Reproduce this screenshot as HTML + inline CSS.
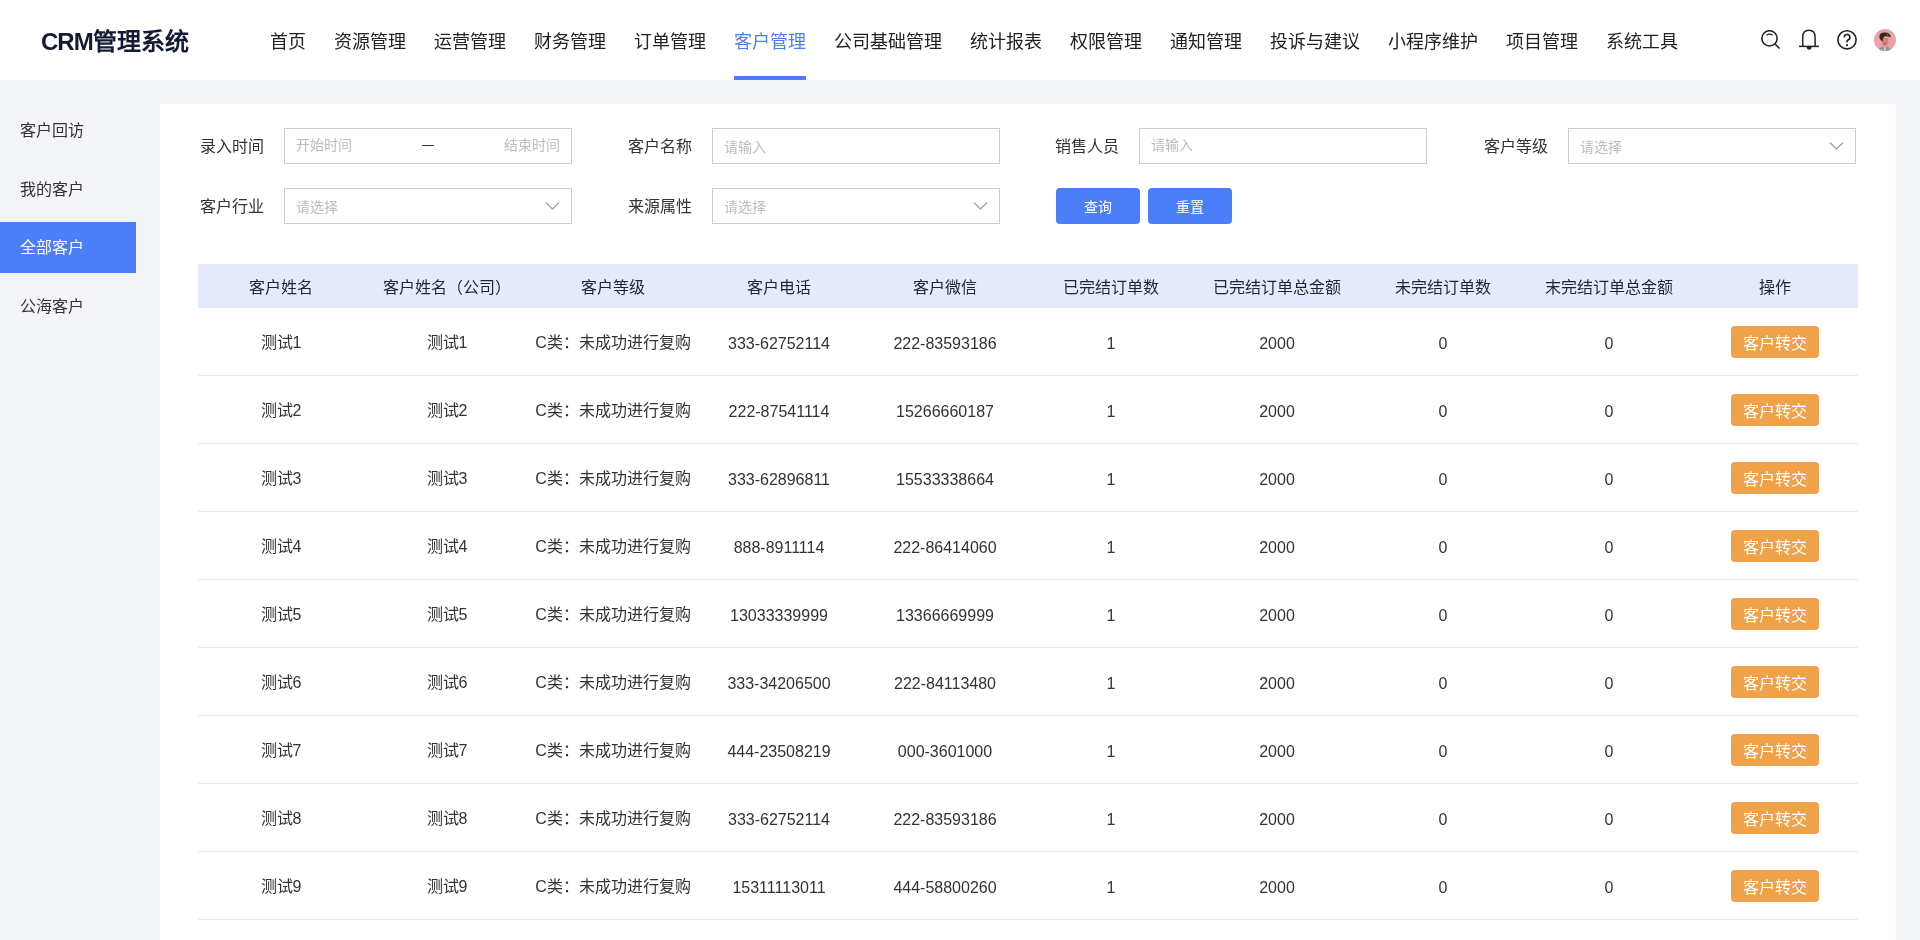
<!DOCTYPE html>
<html lang="zh-CN"><head><meta charset="utf-8">
<style>
*{box-sizing:border-box;margin:0;padding:0}
html,body{width:1920px;height:940px;overflow:hidden}
body{background:#f4f5f9;font-family:"Liberation Sans",sans-serif;color:#333;position:relative}
.hdr{position:absolute;left:0;top:0;width:1920px;height:80px;background:#fff}
.logo{position:absolute;left:41px;top:26px;font-size:24px;font-weight:bold;color:#141a33;line-height:32px;white-space:nowrap}
.nav{position:absolute;left:270px;top:0;height:80px;display:flex;white-space:nowrap}
.nav a{display:block;position:relative;font-size:18px;line-height:84px;height:80px;color:#222;margin-right:28px;text-decoration:none}
.nav a.on{color:#4d7efa}
.nav a.on:after{content:"";position:absolute;left:0;right:0;bottom:0;height:4px;background:#4d7efa}
.ico{position:absolute;top:0}
.side{position:absolute;left:0;top:80px;width:136px}
.side div{position:absolute;left:0;width:136px;height:50px;line-height:52px;padding-left:20px;font-size:16px;color:#333}
.side div.on{background:#4d7efa;color:#fff;height:51px}
.panel{position:absolute;left:160px;top:104px;width:1736px;height:836px;background:#fff}
.lbl{position:absolute;font-size:16px;color:#333;line-height:38px;white-space:nowrap}
.inp{position:absolute;width:288px;height:36px;border:1px solid #cdcdcd;background:#fff}
.ph{position:absolute;font-size:14px;color:#bdbdbd;line-height:36px;white-space:nowrap}
.btn{position:absolute;top:188px;width:84px;height:36px;border-radius:4px;background:#4d7efa;color:#fff;font-size:14px;line-height:38px;text-align:center}
.thead{position:absolute;left:198px;top:264px;width:1660px;height:44px;background:#e5eafc;display:flex}
.thead div{width:166px;text-align:center;line-height:47px;font-size:16px;color:#1f2336;white-space:nowrap}
.row{position:absolute;left:198px;width:1660px;height:68px;border-bottom:1px solid #e9eaee;display:flex}
.row div{width:166px;text-align:center;line-height:69px;font-size:16px;color:#333;white-space:nowrap;position:relative}
.row div.n{top:1px}
.row div span{display:inline-block;width:88px;height:32px;line-height:35px;border-radius:4px;background:#f0a24a;color:#fff;vertical-align:middle;margin-top:-3px}
</style></head>
<body><div style="position:absolute;left:0;top:0;width:1920px;height:940px;will-change:transform">
<div class="hdr">
  <div class="logo"><span style="letter-spacing:-1px">CRM</span>管理系统</div>
  <div class="nav">
    <a>首页</a><a>资源管理</a><a>运营管理</a><a>财务管理</a><a>订单管理</a><a class="on">客户管理</a><a>公司基础管理</a><a>统计报表</a><a>权限管理</a><a>通知管理</a><a>投诉与建议</a><a>小程序维护</a><a>项目管理</a><a>系统工具</a>
  </div>

<svg class="ico" style="left:1755px;top:22px" width="30" height="32" viewBox="1755 22 30 32" fill="none" stroke="#222" stroke-width="1.6">
  <circle cx="1769.5" cy="38.4" r="7.6"/>
  <path d="M1775 44 L1779.5 48.5"/>
  <path d="M1766.6 35.2 Q1769.5 33 1772.6 35.2" stroke-width="1.4"/>
</svg>
<svg class="ico" style="left:1795px;top:22px" width="30" height="32" viewBox="1795 22 30 32" fill="none" stroke="#222" stroke-width="1.5">
  <path d="M1802.7 46.4 V37.2 Q1802.7 30.3 1808.9 30.3 Q1815.1 30.3 1815.1 37.2 V46.4"/>
  <path d="M1799 46.4 H1819"/>
  <path d="M1806.6 46.6 H1811.6 Q1811.4 49.8 1809.1 49.8 Q1806.8 49.8 1806.6 46.6 Z" fill="#222" stroke="none"/>
</svg>
<svg class="ico" style="left:1832px;top:22px" width="30" height="32" viewBox="1832 22 30 32" fill="none" stroke="#222" stroke-width="1.6">
  <circle cx="1847" cy="39.8" r="9.1"/>
  <path d="M1844.3 37.4 A2.8 2.8 0 1 1 1848.3 39.8 Q1847 40.6 1847 42.3" stroke-width="1.7"/>
  <rect x="1846" y="44.3" width="2" height="1.8" fill="#222" stroke="none"/>
</svg>
<svg class="ico" style="left:1874px;top:29px" width="22" height="22" viewBox="0 0 22 22">
  <defs><clipPath id="av"><circle cx="11" cy="11" r="11"/></clipPath></defs>
  <g clip-path="url(#av)">
    <rect width="22" height="22" fill="#e8a2a8"/>
    <path d="M4.5 22 Q5 18.5 8.5 17.5 L13.5 17.5 Q16.5 18.5 17 22 Z" fill="#8e9a92"/>
    <rect x="10.2" y="17.5" width="1.4" height="4.5" fill="#d9d2cc"/>
    <path d="M7.5 9 Q7.5 16.5 10.8 17 Q14.5 16.5 14.5 9 Z" fill="#d7857a"/>
    <path d="M9 13 Q10.5 15 13 13.5 L12.5 16 Q10.5 16.8 9.5 15.5 Z" fill="#c06a60"/>
    <path d="M5.3 8.5 Q5 3.5 10.5 3.5 Q16.5 3.3 16.8 8.5 Q15.5 7.5 14 7.8 Q12 6.8 10 7.8 Q8.8 8.8 8.6 12.5 Q6.5 12 5.3 8.5 Z" fill="#3a2820"/>
    <path d="M12.5 4.5 Q14.5 5.5 13.8 8" stroke="#8a7a55" stroke-width="0.8" fill="none"/>
  </g>
</svg>
</div>
<div class="side">
  <div style="top:25px">客户回访</div>
  <div style="top:84px">我的客户</div>
  <div class="on" style="top:142px">全部客户</div>
  <div style="top:201px">公海客户</div>
</div>
<div class="panel"></div>
<div class="lbl" style="left:200px;top:128px">录入时间</div>
<div class="inp" style="left:284px;top:128px"></div>
<div class="ph" style="left:296px;top:127px">开始时间</div>
<div style="position:absolute;left:422px;top:145px;width:12px;height:1.3px;background:#333"></div>
<div class="ph" style="left:504px;top:127px">结束时间</div>
<div class="lbl" style="left:628px;top:128px">客户名称</div>
<div class="inp" style="left:712px;top:128px"></div>
<div class="ph" style="left:724px;top:129px">请输入</div>
<div class="lbl" style="left:1055px;top:128px">销售人员</div>
<div class="inp" style="left:1139px;top:128px"></div>
<div class="ph" style="left:1151px;top:127px">请输入</div>
<div class="lbl" style="left:1484px;top:128px">客户等级</div>
<div class="inp" style="left:1568px;top:128px"></div>
<div class="ph" style="left:1580px;top:129px">请选择</div>
<svg style="position:absolute;left:1829px;top:141px" width="15" height="10" viewBox="0 0 15 10" fill="none" stroke="#a6a6a6" stroke-width="1.4"><path d="M1 1.5 L7.5 8 L14 1.5"/></svg>
<div class="lbl" style="left:200px;top:188px">客户行业</div>
<div class="inp" style="left:284px;top:188px"></div>
<div class="ph" style="left:296px;top:189px">请选择</div>
<svg style="position:absolute;left:545px;top:201px" width="15" height="10" viewBox="0 0 15 10" fill="none" stroke="#a6a6a6" stroke-width="1.4"><path d="M1 1.5 L7.5 8 L14 1.5"/></svg>
<div class="lbl" style="left:628px;top:188px">来源属性</div>
<div class="inp" style="left:712px;top:188px"></div>
<div class="ph" style="left:724px;top:189px">请选择</div>
<svg style="position:absolute;left:973px;top:201px" width="15" height="10" viewBox="0 0 15 10" fill="none" stroke="#a6a6a6" stroke-width="1.4"><path d="M1 1.5 L7.5 8 L14 1.5"/></svg>
<div class="btn" style="left:1056px">查询</div>
<div class="btn" style="left:1148px">重置</div>
<div class="thead"><div>客户姓名</div><div>客户姓名（公司）</div><div>客户等级</div><div>客户电话</div><div>客户微信</div><div>已完结订单数</div><div>已完结订单总金额</div><div>未完结订单数</div><div>末完结订单总金额</div><div>操作</div></div>
<div class="row" style="top:308px"><div>测试1</div><div>测试1</div><div>C类：未成功进行复购</div><div class="n">333-62752114</div><div class="n">222-83593186</div><div class="n">1</div><div class="n">2000</div><div class="n">0</div><div class="n">0</div><div><span>客户转交</span></div></div>
<div class="row" style="top:376px"><div>测试2</div><div>测试2</div><div>C类：未成功进行复购</div><div class="n">222-87541114</div><div class="n">15266660187</div><div class="n">1</div><div class="n">2000</div><div class="n">0</div><div class="n">0</div><div><span>客户转交</span></div></div>
<div class="row" style="top:444px"><div>测试3</div><div>测试3</div><div>C类：未成功进行复购</div><div class="n">333-62896811</div><div class="n">15533338664</div><div class="n">1</div><div class="n">2000</div><div class="n">0</div><div class="n">0</div><div><span>客户转交</span></div></div>
<div class="row" style="top:512px"><div>测试4</div><div>测试4</div><div>C类：未成功进行复购</div><div class="n">888-8911114</div><div class="n">222-86414060</div><div class="n">1</div><div class="n">2000</div><div class="n">0</div><div class="n">0</div><div><span>客户转交</span></div></div>
<div class="row" style="top:580px"><div>测试5</div><div>测试5</div><div>C类：未成功进行复购</div><div class="n">13033339999</div><div class="n">13366669999</div><div class="n">1</div><div class="n">2000</div><div class="n">0</div><div class="n">0</div><div><span>客户转交</span></div></div>
<div class="row" style="top:648px"><div>测试6</div><div>测试6</div><div>C类：未成功进行复购</div><div class="n">333-34206500</div><div class="n">222-84113480</div><div class="n">1</div><div class="n">2000</div><div class="n">0</div><div class="n">0</div><div><span>客户转交</span></div></div>
<div class="row" style="top:716px"><div>测试7</div><div>测试7</div><div>C类：未成功进行复购</div><div class="n">444-23508219</div><div class="n">000-3601000</div><div class="n">1</div><div class="n">2000</div><div class="n">0</div><div class="n">0</div><div><span>客户转交</span></div></div>
<div class="row" style="top:784px"><div>测试8</div><div>测试8</div><div>C类：未成功进行复购</div><div class="n">333-62752114</div><div class="n">222-83593186</div><div class="n">1</div><div class="n">2000</div><div class="n">0</div><div class="n">0</div><div><span>客户转交</span></div></div>
<div class="row" style="top:852px"><div>测试9</div><div>测试9</div><div>C类：未成功进行复购</div><div class="n">15311113011</div><div class="n">444-58800260</div><div class="n">1</div><div class="n">2000</div><div class="n">0</div><div class="n">0</div><div><span>客户转交</span></div></div>

</div></body></html>
